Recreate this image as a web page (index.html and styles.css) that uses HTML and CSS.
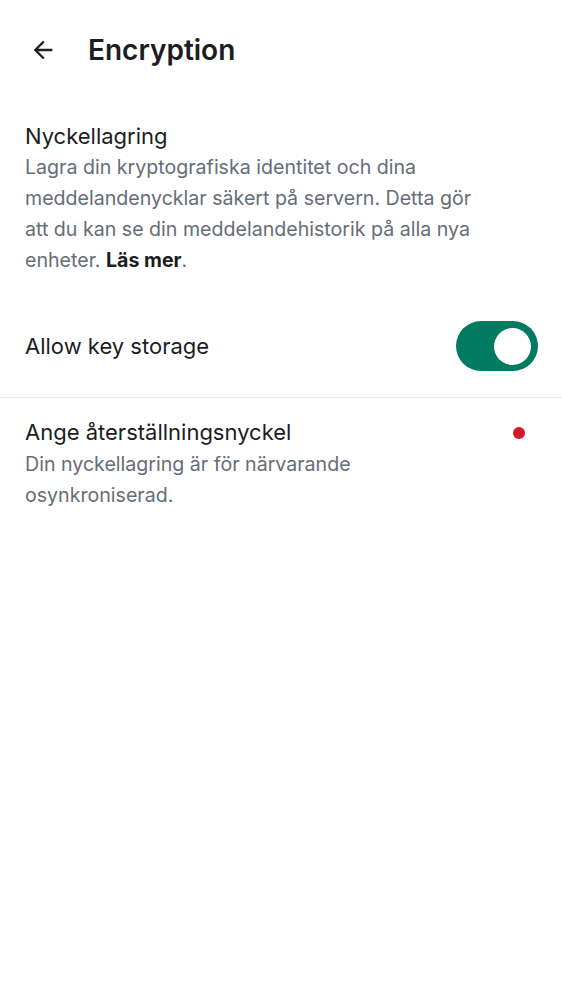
FILE: index.html
```html
<!DOCTYPE html>
<html>
<head>
<meta charset="utf-8">
<link rel="stylesheet" href="styles.css">
</head>
<body>
<div class="app">
  <header class="topbar">
    <button class="back" aria-label="Back">
      <svg width="28" height="28" viewBox="0 0 24 24"><path d="M20 11H7.83l5.59-5.59L12 4l-8 8 8 8 1.41-1.41L7.83 13H20v-2z" fill="#1b1d22"/></svg>
    </button>
    <h1 class="title">Encryption</h1>
  </header>

  <section class="intro">
    <div class="intro-title">Nyckellagring</div>
    <div class="intro-text">Lagra din kryptografiska identitet och dina meddelandenycklar säkert på servern. Detta gör att du kan se din meddelandehistorik på alla nya enheter. <b>Läs mer</b>.</div>
  </section>

  <div class="row toggle-row">
    <span class="row-label">Allow key storage</span>
    <span class="switch"><span class="knob"></span></span>
  </div>

  <div class="divider"></div>

  <div class="row item">
    <div class="item-text">
      <div class="row-label">Ange återställningsnyckel</div>
      <div class="item-sub">Din nyckellagring är för närvarande osynkroniserad.</div>
    </div>
    <span class="dot"></span>
  </div>
</div>
</body>
</html>
```

FILE: styles.css
```css
* { box-sizing: border-box; }
html, body { margin: 0; padding: 0; background: #fff; }
body { font-family: Inter, Roboto, sans-serif; color: #1b1d22; }
.app { width: 562px; }
.topbar { display: flex; align-items: center; height: 100px; padding-left: 29px; }
.back { border: 0; background: none; padding: 0; width: 28px; height: 28px; display: flex; }
.title { margin: 0 0 0 31px; font-size: 28px; font-weight: 600; letter-spacing: 0; }
.intro { padding: 20px 25px 0 25px; }
.intro-title { font-size: 22px; line-height: 32px; }
.intro-text { font-size: 19.6px; line-height: 31px; color: #656d77; max-width: 470px; }
.intro-text b { color: #1b1d22; font-weight: 700; }
.row { display: flex; align-items: center; justify-content: space-between; padding: 0 25px; }
.toggle-row { height: 100px; margin-top: 20px; padding-right: 24px; }
.row-label { font-size: 22px; line-height: 30px; }
.switch { width: 82px; height: 50px; border-radius: 25px; background: #007a61; display: flex; align-items: center; justify-content: flex-end; padding-right: 7px; }
.knob { width: 37px; height: 37px; border-radius: 50%; background: #fff; }
.divider { height: 1px; background: #e8e8ea; margin-top: 1px; }
.item { align-items: flex-start; padding-top: 19px; padding-right: 37px; }
.item-sub { font-size: 19.6px; line-height: 31px; color: #656d77; margin-top: 2px; }
.item-text { width: 420px; }
.dot { width: 12px; height: 12px; border-radius: 50%; background: #d51928; margin-top: 10px; }
```
